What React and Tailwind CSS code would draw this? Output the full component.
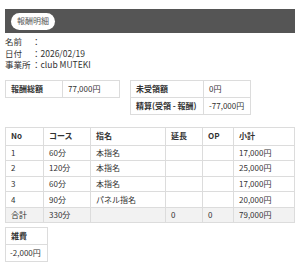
import React from "react";

const rows = [
  { no: "1", course: "60分", shimei: "本指名", ext: "", op: "", sub: "17,000円" },
  { no: "2", course: "120分", shimei: "本指名", ext: "", op: "", sub: "25,000円" },
  { no: "3", course: "60分", shimei: "本指名", ext: "", op: "", sub: "17,000円" },
  { no: "4", course: "90分", shimei: "パネル指名", ext: "", op: "", sub: "20,000円" },
];

export default function App() {
  const cell = "border border-[#dcdcdc] px-[5px] h-[15.6px] align-middle";
  return (
    <div
      className="w-[300px] h-[266px] bg-white text-[#333] text-[8px] leading-none px-[5px] pt-[9px]"
      style={{ fontFamily: '"Noto Sans CJK JP", "Noto Sans", sans-serif' }}
    >
      {/* Header */}
      <div className="h-[24px] bg-[#555555] flex items-center pl-[6px]">
        <span className="bg-white rounded-full h-[17px] w-[44px] flex items-center justify-center text-[#555] text-[8px]">
          報酬明細
        </span>
      </div>

      {/* Info */}
      <div className="mt-[4px] flex flex-col gap-[3px] text-[8.5px]">
        <div className="flex h-[8.5px] items-center"><span className="w-[27px]">名前</span><span>：</span></div>
        <div className="flex h-[8.5px] items-center"><span className="w-[27px]">日付</span><span>：2026/02/19</span></div>
        <div className="flex h-[8.5px] items-center"><span className="w-[27px]">事業所</span><span>：club MUTEKI</span></div>
      </div>

      {/* Summary */}
      <div className="mt-[11px] flex items-start gap-[10px]">
        <table className="border-collapse w-[115px]">
          <tbody>
            <tr>
              <td className="border border-[#dcdcdc] px-[5px] h-[17px] w-[57px] font-bold">報酬総額</td>
              <td className="border border-[#dcdcdc] px-[5px] h-[17px]">77,000円</td>
            </tr>
          </tbody>
        </table>
        <table className="border-collapse w-[121px]">
          <tbody>
            <tr>
              <td className="border border-[#dcdcdc] px-[5px] h-[17px] w-[73px] font-bold">未受領額</td>
              <td className="border border-[#dcdcdc] px-[5px] h-[17px]">0円</td>
            </tr>
            <tr>
              <td className="border border-[#dcdcdc] px-[5px] h-[17px] font-bold whitespace-nowrap">精算(受領 - 報酬)</td>
              <td className="border border-[#dcdcdc] px-[5px] h-[17px]">-77,000円</td>
            </tr>
          </tbody>
        </table>
      </div>

      {/* Detail table */}
      <table className="mt-[12px] border-collapse w-[290px]">
        <thead>
          <tr className="font-bold text-left">
            <th className="border border-[#dcdcdc] px-[5px] h-[18px] w-[38px] text-left">No</th>
            <th className="border border-[#dcdcdc] px-[5px] h-[18px] w-[47px] text-left">コース</th>
            <th className="border border-[#dcdcdc] px-[5px] h-[18px] w-[75px] text-left">指名</th>
            <th className="border border-[#dcdcdc] px-[5px] h-[18px] w-[37px] text-left">延長</th>
            <th className="border border-[#dcdcdc] px-[5px] h-[18px] w-[31px] text-left">OP</th>
            <th className="border border-[#dcdcdc] px-[5px] h-[18px] text-left">小計</th>
          </tr>
        </thead>
        <tbody>
          {rows.map((r) => (
            <tr key={r.no}>
              <td className={cell}>{r.no}</td>
              <td className={cell}>{r.course}</td>
              <td className={cell}>{r.shimei}</td>
              <td className={cell}>{r.ext}</td>
              <td className={cell}>{r.op}</td>
              <td className={cell}>{r.sub}</td>
            </tr>
          ))}
          <tr className="bg-[#f2f2f2]">
            <td className={cell}>合計</td>
            <td className={cell}>330分</td>
            <td className={cell}></td>
            <td className={cell}>0</td>
            <td className={cell}>0</td>
            <td className={cell}>79,000円</td>
          </tr>
        </tbody>
      </table>

      {/* Misc */}
      <table className="mt-[4px] border-collapse w-[43px]">
        <tbody>
          <tr>
            <td className="border border-[#dcdcdc] px-[5px] h-[17px] font-bold">雑費</td>
          </tr>
          <tr>
            <td className="border border-[#dcdcdc] px-[4px] h-[17px]">-2,000円</td>
          </tr>
        </tbody>
      </table>
    </div>
  );
}
